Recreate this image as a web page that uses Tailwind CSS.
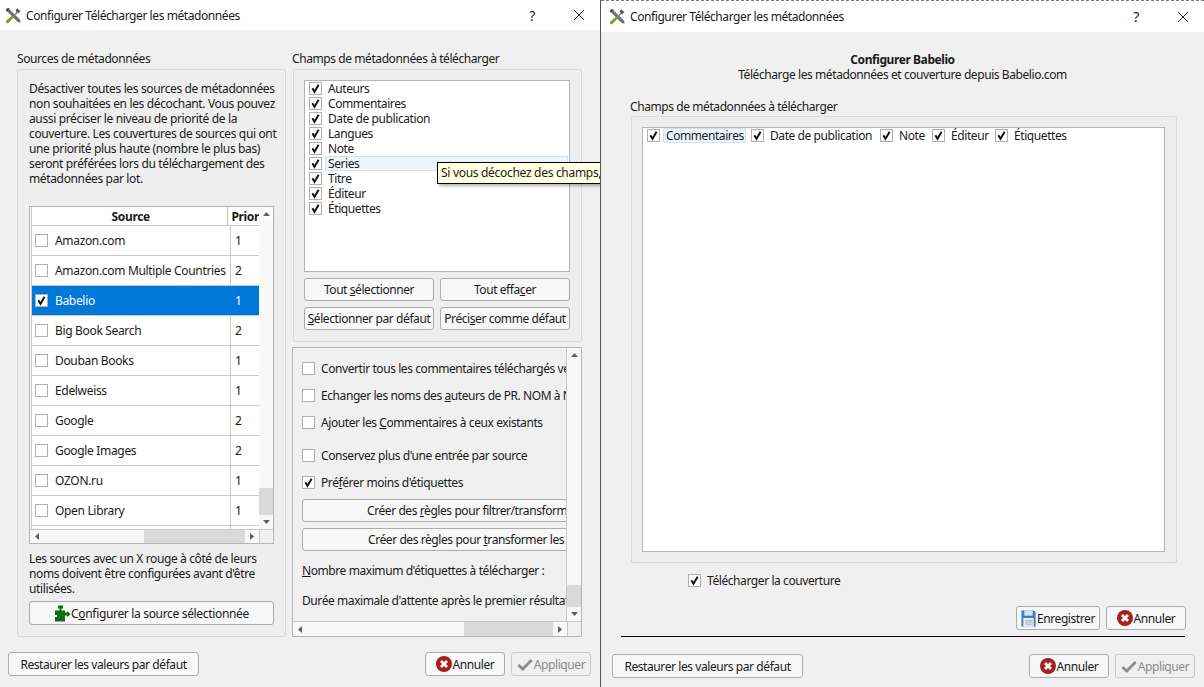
<!DOCTYPE html>
<html lang="fr">
<head>
  <meta charset="UTF-8">
  <title>Configurer Télécharger les métadonnées</title>
  <script src="https://cdn.jsdelivr.net/npm/@tailwindcss/browser@4"></script>
</head>
<body class="relative w-[1204px] h-[687px] overflow-hidden bg-[#f0f0f0] font-['Noto_Sans','Open_Sans',sans-serif] text-[12px] leading-[15px] text-[#1a1a1a] tracking-[-0.42px]">
  <!-- icons -->
  <svg class="hidden">
    <symbol id="tools" viewBox="0 0 18 18">
      <path d="M2 4.5 L4.5 2 L16 13.5 L16.6 16.6 L13.5 16 Z" fill="#6f7173"/>
      <path d="M1 5 L1.5 1.5 L5 1 L3.5 3.5 Z" fill="#3c3e40"/>
      <path d="M13 1.2 L16.6 4.8 L15 5.4 L14.2 6.8 L12 5.4 L11.4 3.2 Z" fill="#55585a"/>
      <path d="M12 5 L13.5 6.5 L7.5 11 Z" fill="#8a8d8f"/>
      <path d="M7.6 9 L9.4 10.8 L4 16.6 Q2.6 17.8 1.4 16.6 Q0.4 15.4 1.6 14 Z" fill="#76a52a"/>
    </symbol>
    <symbol id="check" viewBox="0 0 13 13">
      <path d="M2.8 6.2 L5.3 10.4 L10.2 2.2" fill="none" stroke="#111" stroke-width="2.3"/>
    </symbol>
    <symbol id="cancel" viewBox="0 0 16 16">
      <circle cx="8" cy="8" r="8" fill="#a81e1e"/>
      <path d="M5 5 L11 11 M11 5 L5 11" stroke="#fff" stroke-width="2.8"/>
    </symbol>
    <symbol id="apply" viewBox="0 0 18 14">
      <path d="M1.5 7.5 L6.5 12 L16.5 2" fill="none" stroke="#8d8d8d" stroke-width="3.2"/>
    </symbol>
    <symbol id="puzzle" viewBox="0 0 17 17">
      <path d="M4 0.5 H9 V3.5 H7.5 V5.5 H11 V7.5 H13 V6.5 H14 L16.5 9 L14 11.5 H13 V10.5 H11 V16.5 H1 V12 H3 V10 H1 V5.5 H5.5 V3.5 H4 Z" fill="#0f6d12"/>
    </symbol>
    <symbol id="save" viewBox="0 0 16 18">
      <path d="M0.5 0.5 H14 L15.5 2 V17.5 H0.5 Z" fill="#3f7cc4"/>
      <rect x="3.5" y="0.5" width="9" height="5.5" fill="#d6e4f4"/>
      <rect x="2.5" y="8.5" width="11" height="9" fill="#f4f4f4"/>
      <path d="M4 11 H12.5 M4 13 H12.5 M4 15 H12.5" stroke="#8fa9c8"/>
    </symbol>
    <symbol id="up" viewBox="0 0 7 4"><path d="M3.5 0 L7 4 H0 Z" fill="#606060"/></symbol>
    <symbol id="down" viewBox="0 0 7 4"><path d="M3.5 4 L7 0 H0 Z" fill="#606060"/></symbol>
    <symbol id="left" viewBox="0 0 4 7"><path d="M0 3.5 L4 0 V7 Z" fill="#606060"/></symbol>
    <symbol id="right" viewBox="0 0 4 7"><path d="M4 3.5 L0 0 V7 Z" fill="#606060"/></symbol>
  </svg>

  <!-- fenetre de gauche -->
  <div class="absolute left-0 top-0 w-[600px] h-[687px] overflow-hidden bg-[#f0f0f0]">
    <div class="h-[30px] bg-white flex items-center pl-[5px]">
      <svg class="w-[17px] h-[17px] mr-[4px]"><use href="#tools"/></svg>
      <span>Configurer Télécharger les métadonnées</span>
      <span class="ml-auto text-[14px]">?</span>
      <svg class="w-[12px] h-[12px] ml-[38px] mr-[15px]" viewBox="0 0 12 12"><path d="M1 1 L11 11 M11 1 L1 11" stroke="#222" stroke-width="1"/></svg>
    </div>

    <div class="flex pl-[17px] pt-[21px] gap-[6px]">
      <!-- sources -->
      <div class="w-[269px]">
        <div class="h-[16px] mb-[2px]">Sources de métadonnées</div>
        <div class="h-[568px] bg-[#eeeeee] border border-[#dadada] rounded-[2px] pl-[11px] pt-[11px]">
          <p class="w-[245px] h-[125px] whitespace-nowrap tracking-[-0.36px]">Désactiver toutes les sources de métadonnées<br>non souhaitées en les décochant. Vous pouvez<br>aussi préciser le niveau de priorité de la<br>couverture. Les couvertures de sources qui ont<br>une priorité plus haute (nombre le plus bas)<br>seront préférées lors du téléchargement des<br>métadonnées par lot.</p>
          <div class="w-[245px] h-[338px] border border-[#b4b4b4] flex flex-col bg-white tracking-[-0.33px]">
            <div class="flex flex-1 min-h-0">
              <div class="w-[230px] pl-[1px] overflow-hidden">
                <div class="flex h-[19px] border-b border-l border-[#c8c8c8] font-bold leading-[19px]">
                  <div class="w-[199px] pl-[2px] text-center border-r border-[#c8c8c8]">Source</div>
                  <div class="pl-[3px]">Prior</div>
                </div>
                <div class="flex h-[30px] items-center border-b border-l border-[#c8c8c8]"><span class="w-[13px] h-[13px] ml-[3px] mr-[7px] bg-white border border-[#b0b0b0]"></span><span class="w-[175px]">Amazon.com</span><span class="w-[1px] h-full bg-[#c8c8c8]"></span><span class="pl-[4px]">1</span></div>
                <div class="flex h-[30px] items-center border-b border-l border-[#c8c8c8]"><span class="w-[13px] h-[13px] ml-[3px] mr-[7px] bg-white border border-[#b0b0b0]"></span><span class="w-[175px] whitespace-nowrap">Amazon.com Multiple Countries</span><span class="w-[1px] h-full bg-[#c8c8c8]"></span><span class="pl-[4px]">2</span></div>
                <div class="flex h-[30px] items-center border-b border-l border-[#c8c8c8] bg-[#0078d7] text-white"><span class="w-[13px] h-[13px] ml-[3px] mr-[7px] bg-white border border-[#b0b0b0]"><svg class="w-[11px] h-[11px]"><use href="#check"/></svg></span><span class="w-[175px]">Babelio</span><span class="w-[1px] h-full bg-[#0078d7]"></span><span class="pl-[4px]">1</span></div>
                <div class="flex h-[30px] items-center border-b border-l border-[#c8c8c8]"><span class="w-[13px] h-[13px] ml-[3px] mr-[7px] bg-white border border-[#b0b0b0]"></span><span class="w-[175px]">Big Book Search</span><span class="w-[1px] h-full bg-[#c8c8c8]"></span><span class="pl-[4px]">2</span></div>
                <div class="flex h-[30px] items-center border-b border-l border-[#c8c8c8]"><span class="w-[13px] h-[13px] ml-[3px] mr-[7px] bg-white border border-[#b0b0b0]"></span><span class="w-[175px]">Douban Books</span><span class="w-[1px] h-full bg-[#c8c8c8]"></span><span class="pl-[4px]">1</span></div>
                <div class="flex h-[30px] items-center border-b border-l border-[#c8c8c8]"><span class="w-[13px] h-[13px] ml-[3px] mr-[7px] bg-white border border-[#b0b0b0]"></span><span class="w-[175px]">Edelweiss</span><span class="w-[1px] h-full bg-[#c8c8c8]"></span><span class="pl-[4px]">1</span></div>
                <div class="flex h-[30px] items-center border-b border-l border-[#c8c8c8]"><span class="w-[13px] h-[13px] ml-[3px] mr-[7px] bg-white border border-[#b0b0b0]"></span><span class="w-[175px]">Google</span><span class="w-[1px] h-full bg-[#c8c8c8]"></span><span class="pl-[4px]">2</span></div>
                <div class="flex h-[30px] items-center border-b border-l border-[#c8c8c8]"><span class="w-[13px] h-[13px] ml-[3px] mr-[7px] bg-white border border-[#b0b0b0]"></span><span class="w-[175px]">Google Images</span><span class="w-[1px] h-full bg-[#c8c8c8]"></span><span class="pl-[4px]">2</span></div>
                <div class="flex h-[30px] items-center border-b border-l border-[#c8c8c8]"><span class="w-[13px] h-[13px] ml-[3px] mr-[7px] bg-white border border-[#b0b0b0]"></span><span class="w-[175px]">OZON.ru</span><span class="w-[1px] h-full bg-[#c8c8c8]"></span><span class="pl-[4px]">1</span></div>
                <div class="flex h-[30px] items-center border-b border-l border-[#c8c8c8]"><span class="w-[13px] h-[13px] ml-[3px] mr-[7px] bg-white border border-[#b0b0b0]"></span><span class="w-[175px]">Open Library</span><span class="w-[1px] h-full bg-[#c8c8c8]"></span><span class="pl-[4px]">1</span></div>
                <div class="flex h-[4px] border-l border-[#c8c8c8]"><span class="w-[198px]"></span><span class="w-[1px] h-full bg-[#c8c8c8]"></span></div>
              </div>
              <div class="w-[14px] bg-[#f8f8f8] flex flex-col">
                <div class="h-[14px] bg-[#fbfbfb] flex items-center justify-center"><svg class="w-[7px] h-[4px]"><use href="#up"/></svg></div>
                <div class="h-[267px]"></div>
                <div class="h-[27px] bg-[#d9d9d9]"></div>
                <div class="flex-1 flex items-center justify-center"><svg class="w-[7px] h-[4px]"><use href="#down"/></svg></div>
              </div>
            </div>
            <div class="h-[14px] flex border-t border-[#c8c8c8] bg-[#f8f8f8] shrink-0">
              <div class="w-[14px] flex items-center justify-center"><svg class="w-[4px] h-[7px]"><use href="#left"/></svg></div>
              <div class="w-[100px]"></div>
              <div class="w-[101px] bg-[#d9d9d9]"></div>
              <div class="w-[14px] flex items-center justify-center"><svg class="w-[4px] h-[7px]"><use href="#right"/></svg></div>
              <div class="flex-1 bg-[#f0f0f0] border-l border-[#c8c8c8]"></div>
            </div>
          </div>
          <p class="w-[245px] mt-[7px] tracking-[-0.38px] whitespace-nowrap">Les sources avec un X rouge à côté de leurs<br>noms doivent être configurées avant d'être<br>utilisées.</p>
          <button class="w-[245px] h-[24px] mt-[5px] flex items-center justify-center bg-[#f7f7f7] border border-[#adadad] rounded-[3px] tracking-[-0.33px]">
            <svg class="w-[17px] h-[17px]"><use href="#puzzle"/></svg><span>C<u>o</u>nfigurer la source sélectionnée</span>
          </button>
        </div>
      </div>

      <!-- champs -->
      <div class="w-[290px]">
        <div class="h-[16px] mb-[2px]">Champs de métadonnées à télécharger</div>
        <div class="h-[273px] ml-[1px] w-[289px] bg-[#eeeeee] border border-[#dadada] rounded-[2px] pl-[10px] pt-[10px]">
          <div class="w-[266px] h-[192px] bg-white border border-[#b4b4b4]">
            <div class="flex h-[15px] items-center"><span class="w-[13px] h-[13px] ml-[4px] mr-[3px] bg-white border border-[#b0b0b0]"><svg class="w-[11px] h-[11px]"><use href="#check"/></svg></span><span class="pl-[3px]">Auteurs</span></div>
            <div class="flex h-[15px] items-center"><span class="w-[13px] h-[13px] ml-[4px] mr-[3px] bg-white border border-[#b0b0b0]"><svg class="w-[11px] h-[11px]"><use href="#check"/></svg></span><span class="pl-[3px]">Commentaires</span></div>
            <div class="flex h-[15px] items-center"><span class="w-[13px] h-[13px] ml-[4px] mr-[3px] bg-white border border-[#b0b0b0]"><svg class="w-[11px] h-[11px]"><use href="#check"/></svg></span><span class="pl-[3px]">Date de publication</span></div>
            <div class="flex h-[15px] items-center"><span class="w-[13px] h-[13px] ml-[4px] mr-[3px] bg-white border border-[#b0b0b0]"><svg class="w-[11px] h-[11px]"><use href="#check"/></svg></span><span class="pl-[3px]">Langues</span></div>
            <div class="flex h-[15px] items-center"><span class="w-[13px] h-[13px] ml-[4px] mr-[3px] bg-white border border-[#b0b0b0]"><svg class="w-[11px] h-[11px]"><use href="#check"/></svg></span><span class="pl-[3px]">Note</span></div>
            <div class="flex h-[15px] items-center"><span class="w-[13px] h-[13px] ml-[4px] mr-[3px] bg-white border border-[#b0b0b0]"><svg class="w-[11px] h-[11px]"><use href="#check"/></svg></span><span class="pl-[2px] flex-1 h-[15px] mr-[1px] bg-[#eef6fc] border border-[#cde4f5] rounded-[1px] leading-[13px]">Series</span></div>
            <div class="flex h-[15px] items-center"><span class="w-[13px] h-[13px] ml-[4px] mr-[3px] bg-white border border-[#b0b0b0]"><svg class="w-[11px] h-[11px]"><use href="#check"/></svg></span><span class="pl-[3px]">Titre</span></div>
            <div class="flex h-[15px] items-center"><span class="w-[13px] h-[13px] ml-[4px] mr-[3px] bg-white border border-[#b0b0b0]"><svg class="w-[11px] h-[11px]"><use href="#check"/></svg></span><span class="pl-[3px]">Éditeur</span></div>
            <div class="flex h-[15px] items-center"><span class="w-[13px] h-[13px] ml-[4px] mr-[3px] bg-white border border-[#b0b0b0]"><svg class="w-[11px] h-[11px]"><use href="#check"/></svg></span><span class="pl-[3px]">Étiquettes</span></div>
          </div>
          <div class="w-[266px] grid grid-cols-2 gap-x-[6px] gap-y-[6px] mt-[6px]">
            <button class="h-[23px] bg-[#f7f7f7] border border-[#adadad] rounded-[3px]">Tout <u>s</u>électionner</button>
            <button class="h-[23px] bg-[#f7f7f7] border border-[#adadad] rounded-[3px]">Tout effa<u>c</u>er</button>
            <button class="h-[23px] bg-[#f7f7f7] border border-[#adadad] rounded-[3px] whitespace-nowrap"><u>S</u>électionner par défaut</button>
            <button class="h-[23px] bg-[#f7f7f7] border border-[#adadad] rounded-[3px] whitespace-nowrap">Préci<u>s</u>er comme défaut</button>
          </div>
        </div>

        <!-- zone defilante -->
        <div class="w-[290px] h-[290px] mt-[5px] border border-[#b4b4b4] flex flex-col">
          <div class="flex flex-1 min-h-0">
            <div class="w-[274px] overflow-hidden whitespace-nowrap pl-[9px] border-r border-[#c8c8c8]">
              <div class="flex h-[14px] items-center mt-[13px]"><span class="shrink-0 w-[13px] h-[13px] mr-[6px] bg-white border border-[#b0b0b0]"></span><span class="shrink-0">Convertir tous les commentaires téléchargés vers du texte</span></div>
              <div class="flex h-[14px] items-center mt-[13px]"><span class="shrink-0 w-[13px] h-[13px] mr-[6px] bg-white border border-[#b0b0b0]"></span><span class="shrink-0">Echanger les noms des <u>a</u>uteurs de PR. NOM à NOM, PR.</span></div>
              <div class="flex h-[14px] items-center mt-[13px]"><span class="shrink-0 w-[13px] h-[13px] mr-[6px] bg-white border border-[#b0b0b0]"></span><span>Ajouter les <u>C</u>ommentaires à ceux existants</span></div>
              <div class="flex h-[14px] items-center mt-[19px]"><span class="shrink-0 w-[13px] h-[13px] mr-[6px] bg-white border border-[#b0b0b0]"></span><span>Conservez plus d'une entrée par source</span></div>
              <div class="flex h-[14px] items-center mt-[13px]"><span class="shrink-0 w-[13px] h-[13px] mr-[6px] bg-white border border-[#b0b0b0]"><svg class="w-[11px] h-[11px]"><use href="#check"/></svg></span><span>Pré<u>f</u>érer moins d'étiquettes</span></div>
              <div class="w-[300px] h-[23px] mt-[10px] bg-[#f7f7f7] border border-[#adadad] rounded-[3px] pl-[64px] leading-[21px]">Créer des <u>r</u>ègles pour filtrer/transformer les étiquettes</div>
              <div class="w-[300px] h-[23px] mt-[6px] bg-[#f7f7f7] border border-[#adadad] rounded-[3px] pl-[65px] leading-[21px]">Créer des règles pour <u>t</u>ransformer les noms</div>
              <div class="mt-[12px]"><u>N</u>ombre maximum d'étiquettes à télécharger :</div>
              <div class="mt-[15px]">Durée maximale d'attente après le premier résultat</div>
            </div>
            <div class="w-[14px] bg-[#f8f8f8] flex flex-col">
              <div class="h-[14px] flex items-center justify-center"><svg class="w-[7px] h-[4px]"><use href="#up"/></svg></div>
              <div class="h-[223px]"></div>
              <div class="h-[22px] bg-[#d9d9d9]"></div>
              <div class="flex-1 flex items-center justify-center"><svg class="w-[7px] h-[4px]"><use href="#down"/></svg></div>
            </div>
          </div>
          <div class="h-[15px] flex border-t border-[#c8c8c8] bg-[#f8f8f8] shrink-0">
            <div class="w-[14px] flex items-center justify-center"><svg class="w-[4px] h-[7px]"><use href="#left"/></svg></div>
            <div class="w-[157px]"></div>
            <div class="w-[89px] bg-[#d9d9d9]"></div>
            <div class="w-[14px] flex items-center justify-center"><svg class="w-[4px] h-[7px]"><use href="#right"/></svg></div>
            <div class="flex-1 bg-[#f0f0f0] border-l border-[#c8c8c8]"></div>
          </div>
        </div>
      </div>
    </div>

    <div class="flex items-center pl-[8px] pr-[9px] mt-[15px]">
      <button class="w-[191px] h-[24px] bg-[#f7f7f7] border border-[#adadad] rounded-[3px]">Restaurer les valeurs par défaut</button>
      <button class="w-[80px] h-[24px] ml-auto flex items-center justify-center bg-[#f7f7f7] border border-[#adadad] rounded-[3px]"><svg class="w-[16px] h-[16px] mr-[1px]"><use href="#cancel"/></svg>Annuler</button>
      <button class="w-[80px] h-[24px] ml-[6px] flex items-center justify-center bg-[#f0f0f0] border border-[#c8c8c8] rounded-[3px] text-[#8a8a8a]"><svg class="w-[16px] h-[13px] mr-[1px]"><use href="#apply"/></svg>Appliquer</button>
    </div>

    <!-- infobulle -->
    <div class="absolute left-[437px] top-[162px] w-[180px] h-[22px] bg-[#ffffe1] border border-black shadow-[2px_2px_3px_rgba(0,0,0,0.3)] whitespace-nowrap pl-[3px] leading-[20px] tracking-[-0.3px]">Si vous décochez des champs, ils ne seront pas</div>
  </div>

  <!-- fenetre de droite -->
  <div class="absolute left-[600px] top-0 w-[604px] h-[687px] bg-[#f0f0f0] border-l border-[#555555]">
    <div class="h-[2px] border-t border-dashed border-[#777777] bg-white"></div>
    <div class="h-[30px] bg-white flex items-center pl-[8px] pb-[1px]">
      <svg class="w-[17px] h-[17px] mr-[4px]"><use href="#tools"/></svg>
      <span>Configurer Télécharger les métadonnées</span>
      <span class="ml-auto text-[14px]">?</span>
      <svg class="w-[12px] h-[12px] ml-[38px] mr-[15px]" viewBox="0 0 12 12"><path d="M1 1 L11 11 M11 1 L1 11" stroke="#222" stroke-width="1"/></svg>
    </div>
    <div class="text-center pt-[20px] pl-[2px] pr-[2px]">
      <div class="font-bold">Configurer Babelio</div>
      <div>Télécharge les métadonnées et couverture depuis Babelio.com</div>
    </div>
    <div class="pl-[29px] mt-[17px] h-[16px]">Champs de métadonnées à télécharger</div>
    <div class="ml-[30px] w-[546px] h-[447px] mt-[1px] bg-[#eeeeee] border border-[#dadada] rounded-[2px] pl-[10px] pt-[10px]">
      <div class="w-[523px] h-[425px] bg-white border border-[#b4b4b4] flex items-start pl-[4px]">
        <span class="w-[13px] h-[13px] mt-[1px] bg-white border border-[#b0b0b0]"><svg class="w-[11px] h-[11px]"><use href="#check"/></svg></span>
        <span class="ml-[3px] w-[83px] h-[15px] pl-[2px] bg-[#eef6fc] border border-[#cde4f5] rounded-[1px] leading-[13px]">Commentaires</span>
        <span class="w-[13px] h-[13px] mt-[1px] ml-[5px] bg-white border border-[#b0b0b0]"><svg class="w-[11px] h-[11px]"><use href="#check"/></svg></span>
        <span class="ml-[6px] w-[110px]">Date de publication</span>
        <span class="w-[13px] h-[13px] mt-[1px] bg-white border border-[#b0b0b0]"><svg class="w-[11px] h-[11px]"><use href="#check"/></svg></span>
        <span class="ml-[6px] w-[33px]">Note</span>
        <span class="w-[13px] h-[13px] mt-[1px] bg-white border border-[#b0b0b0]"><svg class="w-[11px] h-[11px]"><use href="#check"/></svg></span>
        <span class="ml-[6px] w-[44px]">Éditeur</span>
        <span class="w-[13px] h-[13px] mt-[1px] bg-white border border-[#b0b0b0]"><svg class="w-[11px] h-[11px]"><use href="#check"/></svg></span>
        <span class="ml-[6px]">Étiquettes</span>
      </div>
    </div>
    <div class="flex items-center pl-[87px] mt-[10px] h-[14px]"><span class="w-[13px] h-[13px] mr-[6px] bg-white border border-[#b0b0b0]"><svg class="w-[11px] h-[11px]"><use href="#check"/></svg></span><span>Télécharger la couverture</span></div>
    <div class="flex justify-end pr-[18px] mt-[19px]">
      <button class="w-[84px] h-[24px] flex items-center justify-center bg-[#f7f7f7] border border-[#adadad] rounded-[3px]"><svg class="w-[15px] h-[17px] mr-[1px]"><use href="#save"/></svg>Enregistrer</button>
      <button class="w-[80px] h-[24px] ml-[6px] flex items-center justify-center bg-[#f7f7f7] border border-[#adadad] rounded-[3px]"><svg class="w-[16px] h-[16px] mr-[1px]"><use href="#cancel"/></svg>Annuler</button>
    </div>
    <div class="ml-[20px] w-[564px] h-[1px] bg-black mt-[6px]"></div>
    <div class="flex items-center pl-[11px] pr-[9px] mt-[17px]">
      <button class="w-[191px] h-[24px] bg-[#f7f7f7] border border-[#adadad] rounded-[3px]">Restaurer les valeurs par défaut</button>
      <button class="w-[80px] h-[24px] ml-auto flex items-center justify-center bg-[#f7f7f7] border border-[#adadad] rounded-[3px]"><svg class="w-[16px] h-[16px] mr-[1px]"><use href="#cancel"/></svg>Annuler</button>
      <button class="w-[80px] h-[24px] ml-[6px] flex items-center justify-center bg-[#f0f0f0] border border-[#c8c8c8] rounded-[3px] text-[#8a8a8a]"><svg class="w-[16px] h-[13px] mr-[1px]"><use href="#apply"/></svg>Appliquer</button>
    </div>
  </div>
</body>
</html>
